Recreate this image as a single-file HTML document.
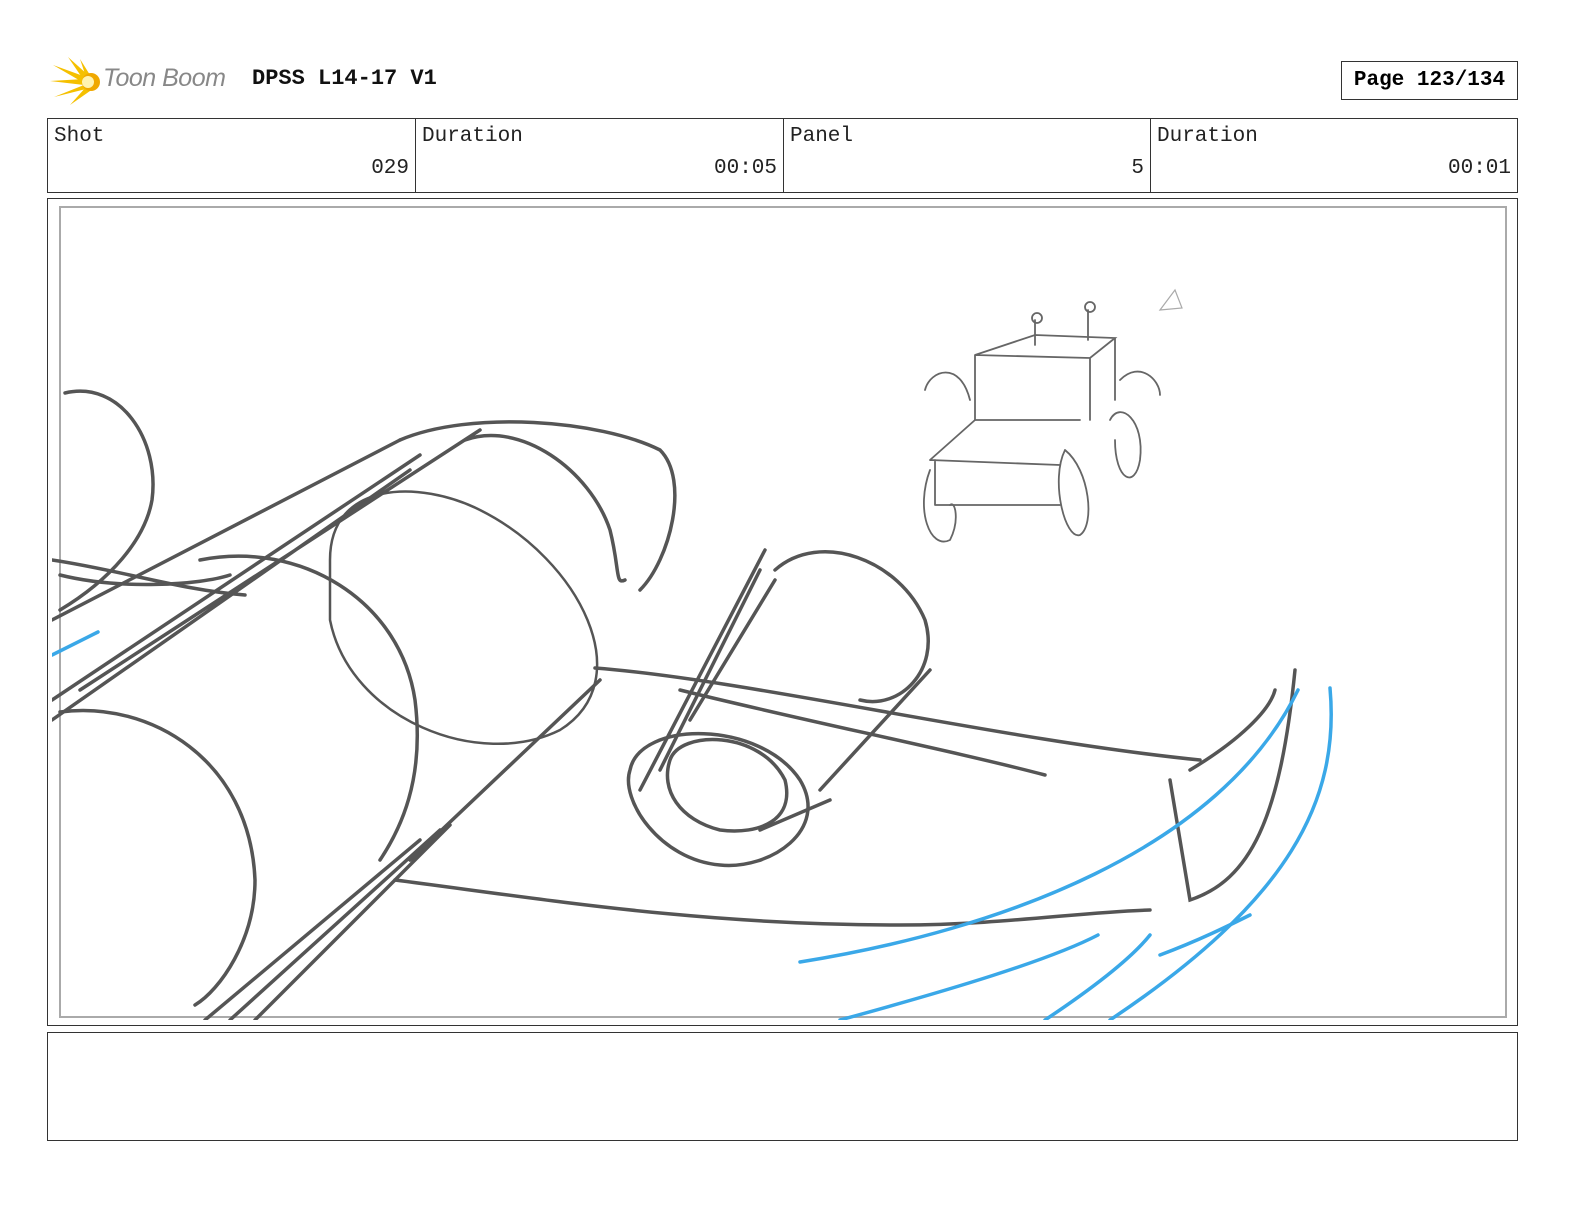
<!DOCTYPE html>
<html><head><meta charset="utf-8"><style>
body{margin:0;width:1584px;height:1224px;background:#fff;position:relative;overflow:hidden;font-family:"Liberation Mono",monospace}
.a{position:absolute}
.cell{position:absolute;top:118px;height:75px;border:1px solid #333;box-sizing:border-box;font-size:21px;color:#222}
.cell .l{position:absolute;left:6px;top:6px}
.cell .v{position:absolute;right:6px;top:38px}
</style></head><body>
<svg class="a" style="left:48px;top:55px" width="56" height="52" viewBox="0 0 56 52">
<g fill="#f5c000"><path d="M5 10 L38 22 L36 28Z"/><path d="M20 2 L40 20 L35 24Z"/><path d="M2 26 L36 24 L36 30Z"/><path d="M6 42 L36 30 L38 34Z"/><path d="M22 50 L38 32 L42 36Z"/><path d="M32 4 L42 20 L38 22Z"/></g>
<circle cx="43" cy="27" r="9" fill="#f0a800"/><circle cx="40" cy="27" r="6" fill="#fff3b0"/></svg>
<div class="a" style="left:103px;top:64px;font-family:'Liberation Sans',sans-serif;font-style:italic;font-size:25px;color:#888;letter-spacing:-0.5px">Toon Boom</div>
<div class="a" style="left:252px;top:66px;font-size:22px;font-weight:bold;color:#111">DPSS L14-17 V1</div>
<div class="a" style="left:1341px;top:61px;width:177px;height:39px;border:1px solid #333;box-sizing:border-box;font-size:21px;font-weight:bold;text-align:center;line-height:37px">Page 123/134</div>
<div class="cell" style="left:47px;width:369px"><span class="l">Shot</span><span class="v">029</span></div>
<div class="cell" style="left:415px;width:369px"><span class="l">Duration</span><span class="v">00:05</span></div>
<div class="cell" style="left:783px;width:368px"><span class="l">Panel</span><span class="v">5</span></div>
<div class="cell" style="left:1150px;width:368px"><span class="l">Duration</span><span class="v">00:01</span></div>
<div class="a" style="left:47px;top:198px;width:1471px;height:828px;border:1px solid #333;box-sizing:border-box"></div>
<div class="a" style="left:59px;top:206px;width:1448px;height:812px;border:2px solid #aaa;box-sizing:border-box"></div>
<div class="a" style="left:47px;top:1032px;width:1471px;height:109px;border:1px solid #333;box-sizing:border-box"></div>
<svg class="a" style="left:0;top:0" width="1584" height="1224" fill="none" stroke-linecap="round">
<defs><clipPath id="c"><rect x="52" y="200" width="1460" height="820"/></clipPath></defs>
<g clip-path="url(#c)" stroke="#555" stroke-width="3.5">
<path d="M65 393 C120 380 160 440 152 500 C145 540 110 580 60 610"/>
<path d="M52 560 C120 570 180 590 245 595"/><path d="M60 575 C120 590 200 585 230 575"/>
<path d="M52 620 L400 440 M52 700 L420 455 M52 720 L410 470 M80 690 L480 430"/>
<path d="M400 440 C470 410 600 420 660 450 C690 480 670 560 640 590"/>
<path d="M465 440 C520 420 590 470 610 530 C620 570 615 585 625 580"/>
<path d="M330 560 C330 480 420 480 480 510 C580 560 640 680 560 730 C480 770 350 720 330 620 Z" stroke-width="2.5"/>
<path d="M60 712 C150 700 250 760 255 880 C255 940 220 990 195 1005"/>
<path d="M200 560 C300 540 400 600 415 700 C425 780 400 830 380 860"/>
<path d="M205 1020 L420 840 M230 1020 L440 830 M255 1020 L450 825 M410 860 L600 680"/>
<path d="M395 880 C550 900 700 925 900 925 C1000 925 1080 912 1150 910"/>
<path d="M595 668 C750 680 1000 740 1200 760"/><path d="M680 690 C800 720 950 750 1045 775"/>
<path d="M640 790 L765 550 M660 770 L760 570 M690 720 L775 580"/>
<path d="M775 570 C820 530 900 560 925 620 C940 670 900 710 860 700"/>
<path d="M630 770 C640 720 760 720 800 780 C830 830 770 870 720 865 C660 860 620 800 630 770Z"/>
<path d="M670 760 C680 730 760 730 785 780 C795 820 760 835 720 830 C680 820 660 790 670 760Z"/>
<path d="M820 790 L930 670 M760 830 L830 800"/>
<path d="M1170 780 L1190 900 C1250 880 1280 820 1295 670"/><path d="M1190 770 C1240 740 1270 710 1275 690"/>
</g>
<g clip-path="url(#c)" stroke="#3aa8e8" stroke-width="3.5">
<path d="M52 655 L98 632"/><path d="M800 962 C1000 930 1220 850 1298 690"/>
<path d="M1330 688 C1340 800 1290 900 1110 1020"/><path d="M840 1020 C950 990 1050 960 1098 935"/>
<path d="M1045 1020 C1090 990 1130 960 1150 935"/><path d="M1160 955 C1200 940 1230 925 1250 915"/>
</g>
<g stroke="#666" stroke-width="1.8">
<path d="M975 355 L1035 335 L1115 338 L1090 358 Z M975 355 L975 420 M1090 358 L1090 420 M1115 338 L1115 400"/>
<path d="M975 420 L1080 420 M930 460 L975 420 M930 460 L1060 465 M935 505 L1060 505 M935 460 L935 505"/>
<path d="M930 470 C915 510 930 550 950 540 C960 520 955 500 950 505"/>
<path d="M1065 450 C1050 480 1065 540 1080 535 C1095 525 1090 470 1065 450"/>
<path d="M1110 420 C1120 400 1145 420 1140 460 C1135 490 1115 480 1115 440"/>
<path d="M970 400 C960 360 930 370 925 390 M1120 380 C1140 360 1160 380 1160 395"/>
<path d="M1035 345 L1035 320 M1088 340 L1088 310"/><circle cx="1037" cy="318" r="5"/><circle cx="1090" cy="307" r="5"/>
<path d="M1160 310 L1175 290 L1182 308 Z" stroke="#aaa" stroke-width="1.2"/>
</g>
</svg>
</body></html>
